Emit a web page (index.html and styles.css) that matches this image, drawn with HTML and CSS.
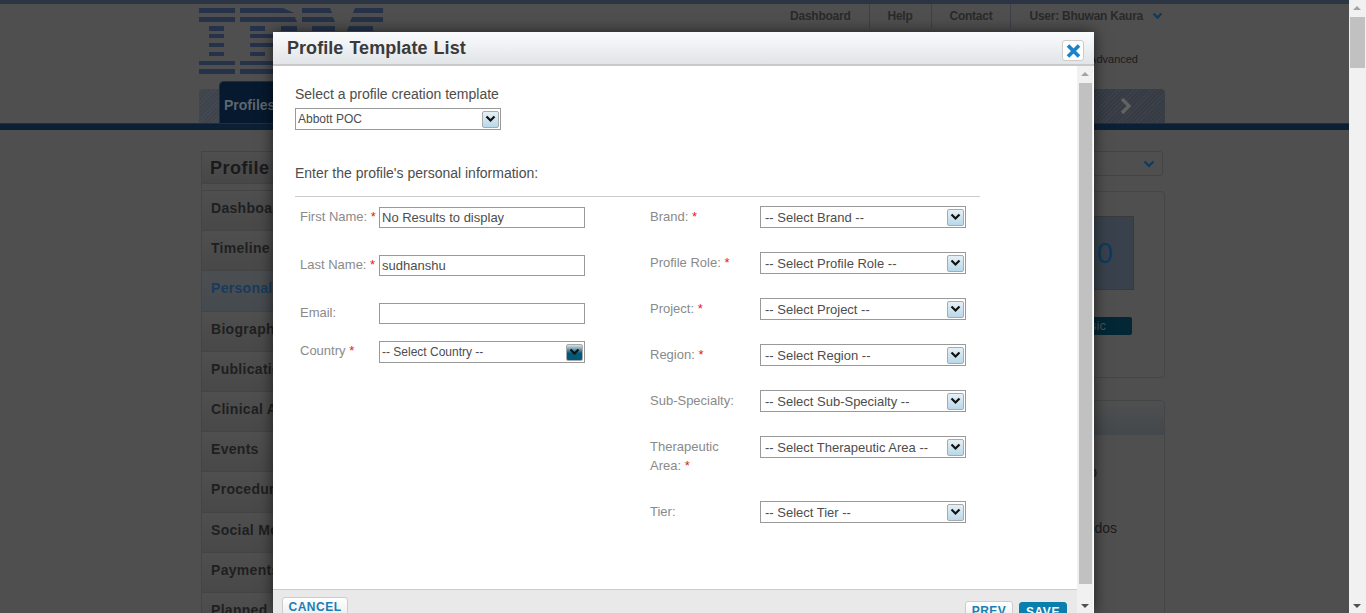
FILE: index.html
```html
<!DOCTYPE html>
<html lang="en">
<head>
<title>Profile Template List</title>
<link rel="stylesheet" href="styles.css">
</head>
<body>
<div class="page">
    <div class="topbar"></div>
    <div class="container">
        <header class="head">
            <svg class="logo" width="184" height="66" viewBox="0 0 184 66" aria-label="IBM logo">
                <g fill="#25324a">
                    <rect x="0" y="0" width="36" height="5"/><path d="M41 0H84L95 5H41Z"/><path d="M103 0H131L133 5H103Z"/><path d="M156 0H184V5H154Z"/>
                    <rect x="0" y="9" width="36" height="5"/><path d="M41 9H96L98 14H41Z"/><path d="M103 9H134L136 14H103Z"/><path d="M153 9H184V14H151Z"/>
                    <rect x="10" y="18" width="15" height="5"/><rect x="51" y="18" width="15" height="5"/><rect x="82" y="18" width="16" height="5"/><path d="M113 18H136V23H113Z"/><path d="M150 18H174V23H148Z"/>
                    <rect x="10" y="26" width="15" height="4"/><rect x="51" y="26" width="42" height="4"/>
                    <rect x="10" y="35" width="15" height="4"/><rect x="51" y="35" width="42" height="4"/>
                    <rect x="10" y="44" width="15" height="4"/><rect x="51" y="44" width="15" height="4"/>
                    <rect x="0" y="53" width="36" height="4"/><rect x="41" y="53" width="40" height="4"/>
                    <rect x="0" y="61" width="36" height="5"/><rect x="41" y="61" width="40" height="5"/>
                </g>
            </svg>
            <div class="head-right">
                <nav class="toplinks">
                    <a class="toplink">Dashboard</a>
                    <a class="toplink">Help</a>
                    <a class="toplink">Contact</a>
                    <a class="toplink user">User: Bhuwan Kaura
                        <svg width="11" height="8" viewBox="0 0 11 8"><path d="M1.5 1.5 5.5 5.5 9.5 1.5" fill="none" stroke="#0e3a5e" stroke-width="2.4"/></svg>
                    </a>
                </nav>
                <div class="advanced">Advanced</div>
            </div>
        </header>
        <div class="tabs">
            <div class="tab-end"></div>
            <div class="tab-active">Profiles</div>
            <div class="tab-next">
                <svg width="14" height="18" viewBox="0 0 14 18"><path d="M3 2 10 9 3 16" fill="none" stroke="#626262" stroke-width="3.4"/></svg>
            </div>
        </div>
    </div>
    <div class="navline"></div>
    <div class="container columns">
        <aside class="sidebar">
            <h2 class="side-title">Profile</h2>
            <ul class="side-list">
                <li>Dashboard</li>
                <li>Timeline</li>
                <li class="current">Personal</li>
                <li>Biography</li>
                <li>Publications</li>
                <li>Clinical Activity</li>
                <li>Events</li>
                <li>Procedures</li>
                <li>Social Media</li>
                <li>Payments</li>
                <li>Planned Activity</li>
            </ul>
        </aside>
        <section class="rightcol">
            <div class="drop">
                <svg width="12" height="8" viewBox="0 0 12 8"><path d="M1.5 1.5 6 6 10.5 1.5" fill="none" stroke="#0e3a5e" stroke-width="2.2"/></svg>
            </div>
            <div class="card">
                <div class="score"><span>0</span></div>
                <div class="badge">Basic</div>
            </div>
            <div class="card notes">
                <div class="card-head"></div>
                <p class="note-one">to</p>
                <p class="note-two">Todos</p>
            </div>
        </section>
    </div>
</div>

<div class="pagebar">
    <span class="arrow-up"></span>
    <div class="pagethumb"></div>
    <span class="arrow-down"></span>
</div>

<div class="modal">
    <div class="modal-head">
        <h1>Profile Template List</h1>
        <button class="close" type="button" aria-label="Close">
            <svg width="15" height="14" viewBox="0 0 15 14"><path d="M2 1.5 13 12.5M13 1.5 2 12.5" stroke="#1a82c8" stroke-width="3.6" fill="none"/></svg>
        </button>
    </div>
    <div class="modal-main">
        <div class="modal-left">
            <div class="modal-body">
                <label class="template-label">Select a profile creation template</label>
                <div class="select small">
                    <span>Abbott POC</span>
                    <span class="sel-arrow"><svg width="11" height="8" viewBox="0 0 11 8"><path d="M1.5 1.5 5.5 5.5 9.5 1.5" fill="none" stroke="#111" stroke-width="2.2"/></svg></span>
                </div>
                <p class="intro">Enter the profile's personal information:</p>
                <hr class="rule">
                <form class="form">
                    <div class="col-left">
                        <div class="row">
                            <label>First Name: <em>*</em></label>
                            <input type="text" value="No Results to display">
                        </div>
                        <div class="row">
                            <label>Last Name: <em>*</em></label>
                            <input type="text" value="sudhanshu">
                        </div>
                        <div class="row short">
                            <label>Email:</label>
                            <input type="text">
                        </div>
                        <div class="row">
                            <label>Country <em>*</em></label>
                            <div class="select small">
                                <span>-- Select Country --</span>
                                <span class="sel-arrow hot"><svg width="11" height="8" viewBox="0 0 11 8"><path d="M1.5 1.5 5.5 5.5 9.5 1.5" fill="none" stroke="#111" stroke-width="2.2"/></svg></span>
                            </div>
                        </div>
                    </div>
                    <div class="col-right">
                        <div class="row">
                            <label>Brand: <em>*</em></label>
                            <div class="select"><span>-- Select Brand --</span><span class="sel-arrow"><svg width="11" height="8" viewBox="0 0 11 8"><path d="M1.5 1.5 5.5 5.5 9.5 1.5" fill="none" stroke="#111" stroke-width="2.2"/></svg></span></div>
                        </div>
                        <div class="row">
                            <label>Profile Role: <em>*</em></label>
                            <div class="select"><span>-- Select Profile Role --</span><span class="sel-arrow"><svg width="11" height="8" viewBox="0 0 11 8"><path d="M1.5 1.5 5.5 5.5 9.5 1.5" fill="none" stroke="#111" stroke-width="2.2"/></svg></span></div>
                        </div>
                        <div class="row">
                            <label>Project: <em>*</em></label>
                            <div class="select"><span>-- Select Project --</span><span class="sel-arrow"><svg width="11" height="8" viewBox="0 0 11 8"><path d="M1.5 1.5 5.5 5.5 9.5 1.5" fill="none" stroke="#111" stroke-width="2.2"/></svg></span></div>
                        </div>
                        <div class="row">
                            <label>Region: <em>*</em></label>
                            <div class="select"><span>-- Select Region --</span><span class="sel-arrow"><svg width="11" height="8" viewBox="0 0 11 8"><path d="M1.5 1.5 5.5 5.5 9.5 1.5" fill="none" stroke="#111" stroke-width="2.2"/></svg></span></div>
                        </div>
                        <div class="row">
                            <label>Sub-Specialty:</label>
                            <div class="select"><span>-- Select Sub-Specialty --</span><span class="sel-arrow"><svg width="11" height="8" viewBox="0 0 11 8"><path d="M1.5 1.5 5.5 5.5 9.5 1.5" fill="none" stroke="#111" stroke-width="2.2"/></svg></span></div>
                        </div>
                        <div class="row">
                            <label class="two-line">Therapeutic Area: <em>*</em></label>
                            <div class="select"><span>-- Select Therapeutic Area --</span><span class="sel-arrow"><svg width="11" height="8" viewBox="0 0 11 8"><path d="M1.5 1.5 5.5 5.5 9.5 1.5" fill="none" stroke="#111" stroke-width="2.2"/></svg></span></div>
                        </div>
                        <div class="row">
                            <label>Tier:</label>
                            <div class="select"><span>-- Select Tier --</span><span class="sel-arrow"><svg width="11" height="8" viewBox="0 0 11 8"><path d="M1.5 1.5 5.5 5.5 9.5 1.5" fill="none" stroke="#111" stroke-width="2.2"/></svg></span></div>
                        </div>
                    </div>
                </form>
            </div>
            <div class="modal-foot">
                <button class="btn cancel" type="button">CANCEL</button>
                <div class="foot-right">
                    <button class="btn" type="button">PREV</button>
                    <button class="btn save" type="button">SAVE</button>
                </div>
            </div>
        </div>
        <div class="modalbar">
            <span class="arrow-up"></span>
            <div class="modalthumb"></div>
            <span class="arrow-down"></span>
        </div>
    </div>
</div>
</body>
</html>
```

FILE: styles.css
```css
* {
    box-sizing: border-box;
}

html, body {
    margin: 0;
    height: 613px;
    overflow: hidden;
}

body {
    font-family: "Liberation Sans", Arial, sans-serif;
    background-color: #4f4f4f;
    display: flex;
}

/* dimmed page behind the dialog */
.page {
    width: 1349px;
    height: 613px;
    overflow: hidden;
    background-color: #4f4f4f;
}

.topbar {
    height: 4px;
    background-color: #2b3544;
}

.container {
    margin-left: 199px;
    width: 966px;
}

.head {
    display: flex;
    justify-content: space-between;
    height: 77px;
}

.logo {
    margin-top: 4px;
}

.head-right {
    display: flex;
    flex-direction: column;
    align-items: flex-end;
}

.toplinks {
    display: flex;
    height: 28px;
    padding-right: 2px;
}

.toplink {
    display: flex;
    align-items: center;
    gap: 9px;
    height: 24px;
    padding: 0 18px;
    font-size: 12px;
    font-weight: bold;
    letter-spacing: -.25px;
    color: #2a2a2a;
    border-right: 1px solid #3c4048;
}

.toplink.user {
    padding-right: 0;
    border-right: none;
}

.advanced {
    margin-top: 21px;
    padding-right: 27px;
    font-size: 11px;
    color: #1c1c1c;
}

.tabs {
    display: flex;
    align-items: flex-end;
    height: 42px;
}

.tab-end {
    width: 20px;
    height: 34px;
    background: repeating-linear-gradient(135deg, #454a52, #454a52 1px, #3f444c 1px, #3f444c 3px);
    border-radius: 4px 0 0 0;
}

.tab-active {
    width: 120px;
    height: 42px;
    padding: 15px 0 0 4px;
    font-size: 14px;
    font-weight: bold;
    color: #5f666d;
    background-color: #06192e;
    border-top: 1px solid #1c2d48;
    border-left: 1px solid #1c2d48;
    border-radius: 5px 0 0 0;
}

.tab-next {
    display: flex;
    align-items: center;
    justify-content: center;
    width: 78px;
    height: 34px;
    margin-left: auto;
    background: repeating-linear-gradient(135deg, #3d4149, #3d4149 1px, #373b44 1px, #373b44 3px);
    border-radius: 0 4px 0 0;
}

.navline {
    height: 7px;
    background-color: #0b2036;
    border-top: 1px solid #1c2f44;
}

.columns {
    display: flex;
    justify-content: space-between;
    margin-top: 21px;
}

.sidebar {
    width: 300px;
    margin-left: 2px;
    border: 1px solid #444;
}

.side-title {
    margin: 0;
    height: 32px;
    padding-left: 8px;
    font-size: 18px;
    line-height: 32px;
    letter-spacing: .5px;
    color: #1a1a1a;
    background: linear-gradient(#4f4f4f, #474747);
    border-bottom: 1px solid #444;
}

.side-list {
    list-style: none;
    margin: 6px 0 0;
    padding: 0;
}

.side-list li {
    height: 40.2px;
    padding-left: 9px;
    font-size: 14px;
    font-weight: bold;
    line-height: 34px;
    letter-spacing: .3px;
    color: #1f1f1f;
    background: linear-gradient(#4f4f4f, #484848);
    border-top: 1px solid #444;
}

.side-list li.current {
    color: #183b5c;
    background: linear-gradient(#4c4f52, #454a4e);
}

.rightcol {
    width: 300px;
}

.drop {
    display: flex;
    align-items: center;
    justify-content: flex-end;
    width: 298px;
    height: 25px;
    padding-right: 7px;
    border: 1px solid #444;
    border-radius: 3px;
}

.card {
    margin-top: 15px;
    height: 187px;
    border: 1px solid #454545;
    border-radius: 4px;
}

.score {
    display: flex;
    align-items: center;
    justify-content: flex-end;
    width: 268px;
    height: 74px;
    margin: 24px 0 0;
    padding-right: 20px;
    font-size: 29px;
    color: #0e3a5e;
    background-color: #39424c;
    border: 1px solid #3a3a3a;
}

.badge {
    width: 266px;
    height: 18px;
    margin-top: 27px;
    padding-right: 26px;
    font-size: 13px;
    line-height: 18px;
    text-align: right;
    color: #43525a;
    background-color: #032735;
    border-radius: 2px;
}

.notes {
    margin-top: 22px;
    height: 300px;
}

.card-head {
    height: 34px;
    background: linear-gradient(#4f4f4f, #43484c);
    border-radius: 4px 4px 0 0;
}

.notes p {
    margin: 0;
    font-size: 14px;
    line-height: 16px;
    text-align: right;
    color: #1c1c1c;
}

.notes .note-one {
    padding: 29px 67px 0 0;
}

.notes .note-two {
    padding: 40px 47px 0 0;
}

.pagebar {
    position: relative;
    width: 17px;
    height: 613px;
    background-color: #f1f1f1;
}

.pagethumb {
    position: absolute;
    top: 17px;
    left: 1px;
    width: 15px;
    height: 51px;
    background-color: #c1c1c1;
}

.arrow-up,
.arrow-down {
    position: absolute;
    left: 4px;
    width: 0;
    height: 0;
    border-left: 4px solid transparent;
    border-right: 4px solid transparent;
}

.arrow-up {
    top: 6px;
    border-bottom: 4px solid #a3a3a3;
}

.arrow-down {
    bottom: 5px;
    border-top: 4px solid #505050;
}

/* dialog */
.modal {
    position: absolute;
    top: 32px;
    left: 273px;
    width: 821px;
    height: 581px;
    display: flex;
    flex-direction: column;
    background-color: #fff;
    box-shadow: 0 0 14px rgba(0, 0, 0, .6);
    overflow: hidden;
}

.modal-head {
    display: flex;
    align-items: flex-start;
    justify-content: space-between;
    height: 34px;
    padding: 1px 10px 0 14px;
    background: linear-gradient(#fafbfc, #e1e5e8);
    border-bottom: 2px solid #c9c9c9;
}

.modal-head h1 {
    margin: 0;
    font-size: 18px;
    line-height: 31px;
    letter-spacing: .05px;
    word-spacing: 1px;
    color: #3a3a3a;
}

.close {
    display: flex;
    align-items: center;
    justify-content: center;
    width: 22px;
    height: 21px;
    margin-top: 7px;
    padding: 0;
    background-color: #fff;
    border: 1px solid #ccc;
    border-radius: 3px;
}

.modal-main {
    display: flex;
    height: 547px;
}

.modal-left {
    display: flex;
    flex-direction: column;
    width: 804px;
}

.modal-body {
    height: 523px;
    padding: 20px 0 0 22px;
}

.template-label {
    display: block;
    margin-bottom: 6px;
    font-size: 14px;
    line-height: 16px;
    color: #4d4d4d;
}

.select {
    display: flex;
    align-items: center;
    justify-content: space-between;
    width: 206px;
    height: 22px;
    padding: 0 1px 0 4px;
    font-size: 13px;
    color: #4d4d4d;
    background-color: #fff;
    border: 1px solid #999;
}

.sel-arrow {
    display: flex;
    align-items: center;
    justify-content: center;
    width: 17px;
    height: 17px;
    background: linear-gradient(#e6f0f6, #b9d8e8);
    border: 1px solid #aaa;
    border-radius: 2px;
}

.sel-arrow.hot {
    background: linear-gradient(#d6e4ea, #00587a 55%);
}

.select.small {
    padding-left: 2px;
    font-size: 12px;
}

.intro {
    margin: 35px 0 0;
    font-size: 14px;
    line-height: 16px;
    color: #4d4d4d;
}

.rule {
    width: 685px;
    height: 1px;
    margin: 15px 0 9px;
    background-color: #ccc;
    border: none;
}

.form {
    display: flex;
}

.col-left {
    width: 355px;
    padding: 1px 0 0 5px;
}

.col-right {
    width: 316px;
}

.row {
    display: flex;
    align-items: flex-start;
    margin-bottom: 24px;
}

.col-left .row {
    margin-bottom: 27px;
}

.col-left .row.short {
    margin-bottom: 17px;
}

.row label {
    font-size: 13px;
    line-height: 19px;
    color: #8a8a8a;
}

.col-left label {
    width: 79px;
}

.col-right label {
    width: 110px;
    padding-top: 1px;
}

.row label.two-line {
    padding-right: 30px;
    padding-bottom: 2px;
}

.row em {
    font-style: normal;
    color: #d22;
}

.row input {
    width: 206px;
    height: 21px;
    padding: 0 2px;
    font-family: "Liberation Sans", Arial, sans-serif;
    font-size: 13px;
    color: #4d4d4d;
    border: 1px solid #999;
    border-radius: 0;
    outline: none;
}

.modal-foot {
    display: flex;
    justify-content: space-between;
    height: 24px;
    padding: 0 10px 0 9px;
    background-color: #e9e9e9;
    border-top: 1px solid #ccc;
}

.foot-right {
    display: flex;
    gap: 6px;
}

.btn {
    width: 48px;
    height: 20px;
    margin-top: 11px;
    padding: 0;
    font-family: "Liberation Sans", Arial, sans-serif;
    font-size: 12px;
    font-weight: bold;
    line-height: 16px;
    letter-spacing: .5px;
    color: #1a7fb5;
    background: linear-gradient(#fff, #eee);
    border: 1px solid #ccc;
    border-radius: 3px 3px 0 0;
}

.btn.cancel {
    width: 66px;
    margin-top: 7px;
}

.btn.save {
    margin-top: 12px;
    color: #fff;
    background: #0a7fae;
    border-color: #0a7fae;
}

.modalbar {
    position: relative;
    width: 16px;
    height: 547px;
    background-color: #f1f1f1;
}

.modalthumb {
    position: absolute;
    top: 17px;
    left: 2px;
    width: 13px;
    height: 501px;
    background-color: #c1c1c1;
}
```
